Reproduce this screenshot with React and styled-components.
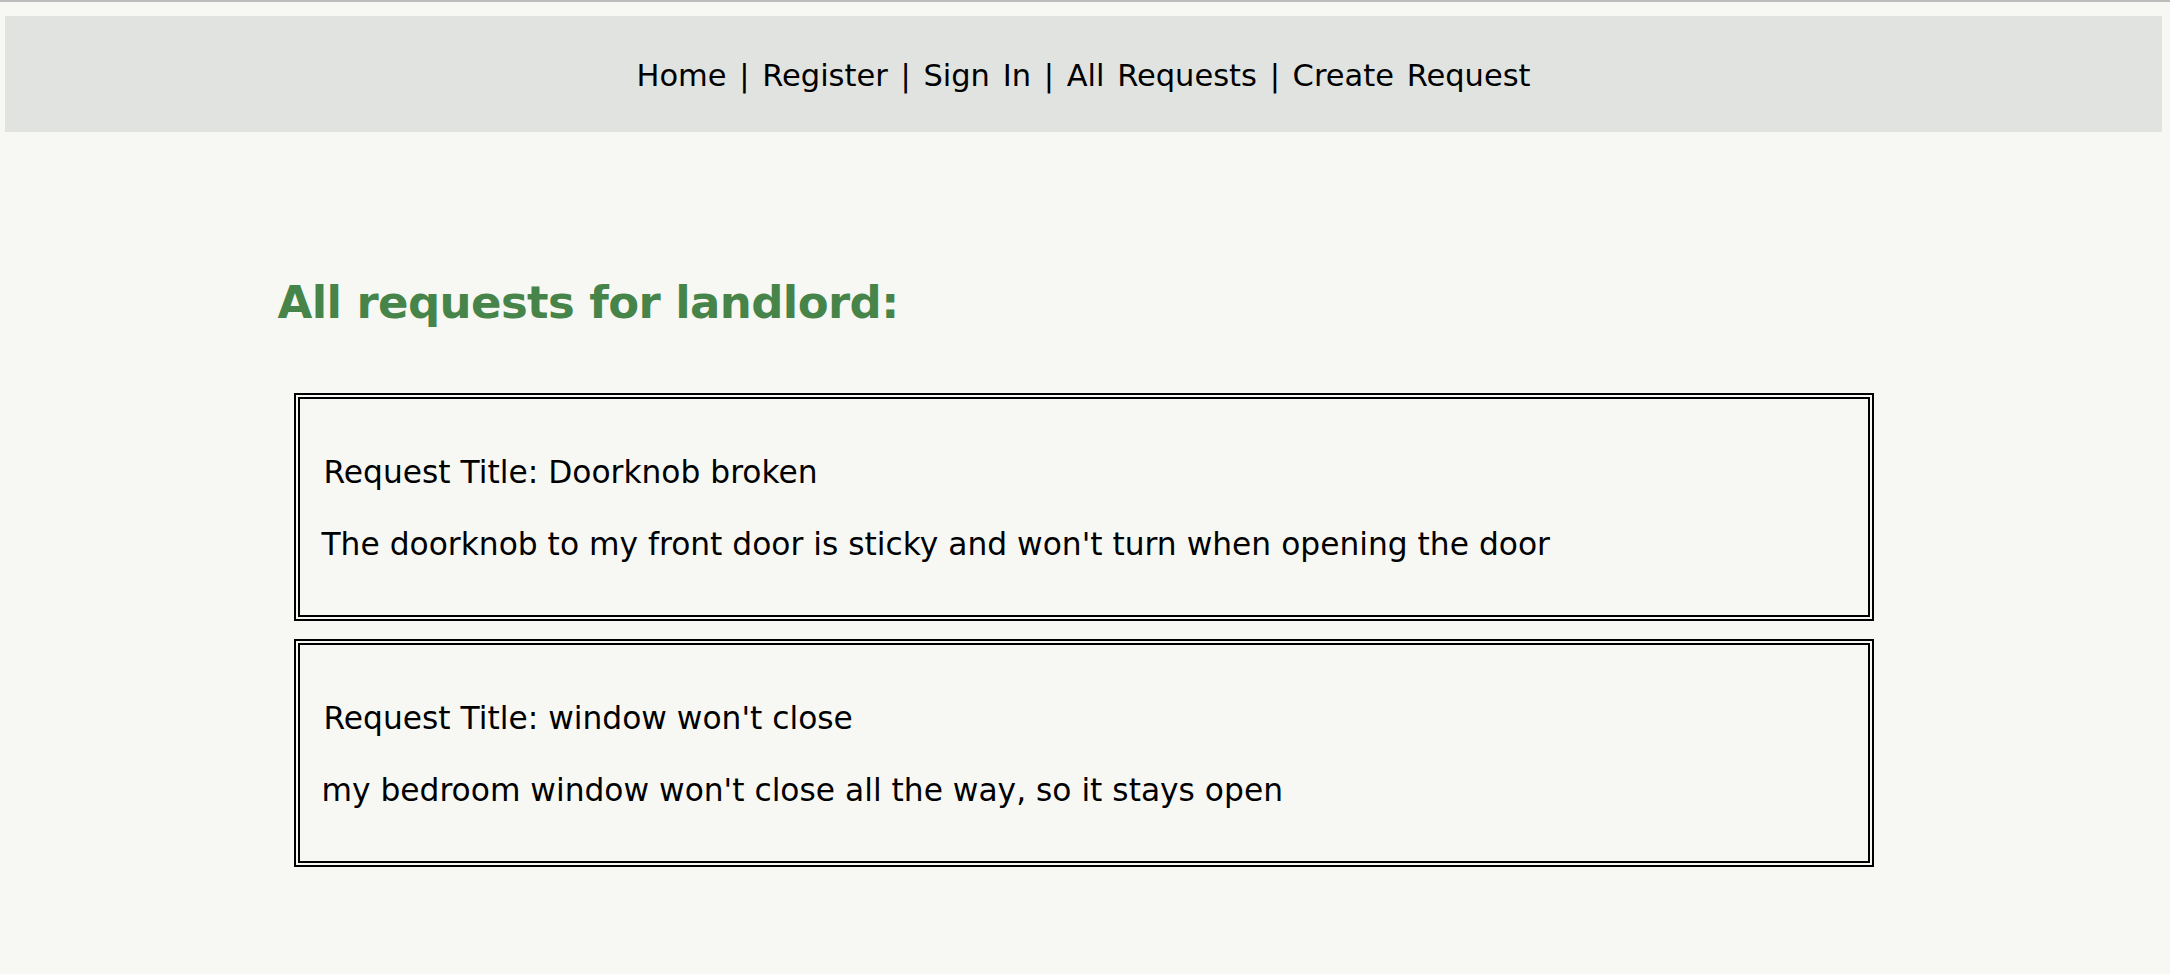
import styled, { createGlobalStyle } from "styled-components";

const requests = [
  {
    id: 1,
    title: "Doorknob broken",
    description:
      "The doorknob to my front door is sticky and won't turn when opening the door",
  },
  {
    id: 2,
    title: "window won't close",
    description: "my bedroom window won't close all the way, so it stays open",
  },
];

export default function App() {
  return (
    <>
      <GlobalStyle />
      <Page>
        <NavBar>
          <NavText>
            Home | Register | Sign In | All Requests | Create Request
          </NavText>
        </NavBar>
        <Main>
          <Heading>All requests for landlord:</Heading>
          <List>
            {requests.map((req) => (
              <Card key={req.id}>
                <Title>Request Title: {req.title}</Title>
                <Description>{req.description}</Description>
              </Card>
            ))}
          </List>
        </Main>
      </Page>
    </>
  );
}

const GlobalStyle = createGlobalStyle`
  html, body {
    margin: 0;
    background: #f7f8f4;
  }
  body {
    font-family: "DejaVu Sans", "Liberation Sans", sans-serif;
    color: #000;
  }
`;

const Page = styled.div`
  min-height: 974px;
  box-sizing: border-box;
  border-top: 2px solid #bdbdbd;
  padding: 14px 8px 40px 5px;
`;

const NavBar = styled.nav`
  height: 116px;
  background: #e1e3e0;
  display: flex;
  align-items: center;
  justify-content: center;
`;

const NavText = styled.div`
  font-size: 30.5px;
  word-spacing: 3px;
  padding-top: 2px;
  white-space: pre;
`;

const Main = styled.main`
  width: 1612px;
  margin: 0 auto;
`;

const Heading = styled.h1`
  margin: 144px 0 64px;
  font-size: 45px;
  letter-spacing: -0.6px;
  font-weight: 700;
  color: #478449;
`;

const List = styled.div`
  display: flex;
  flex-direction: column;
  gap: 18px;
  margin: 0 16px;
`;

const Card = styled.div`
  border: 6px double #000;
  padding: 55px 22px 53px;
  display: flex;
  flex-direction: column;
  gap: 36px;
`;

const Title = styled.p`
  margin: 0 0 0 2px;
  font-size: 31.3px;
`;

const Description = styled.p`
  margin: 0;
  font-size: 31.3px;
`;
